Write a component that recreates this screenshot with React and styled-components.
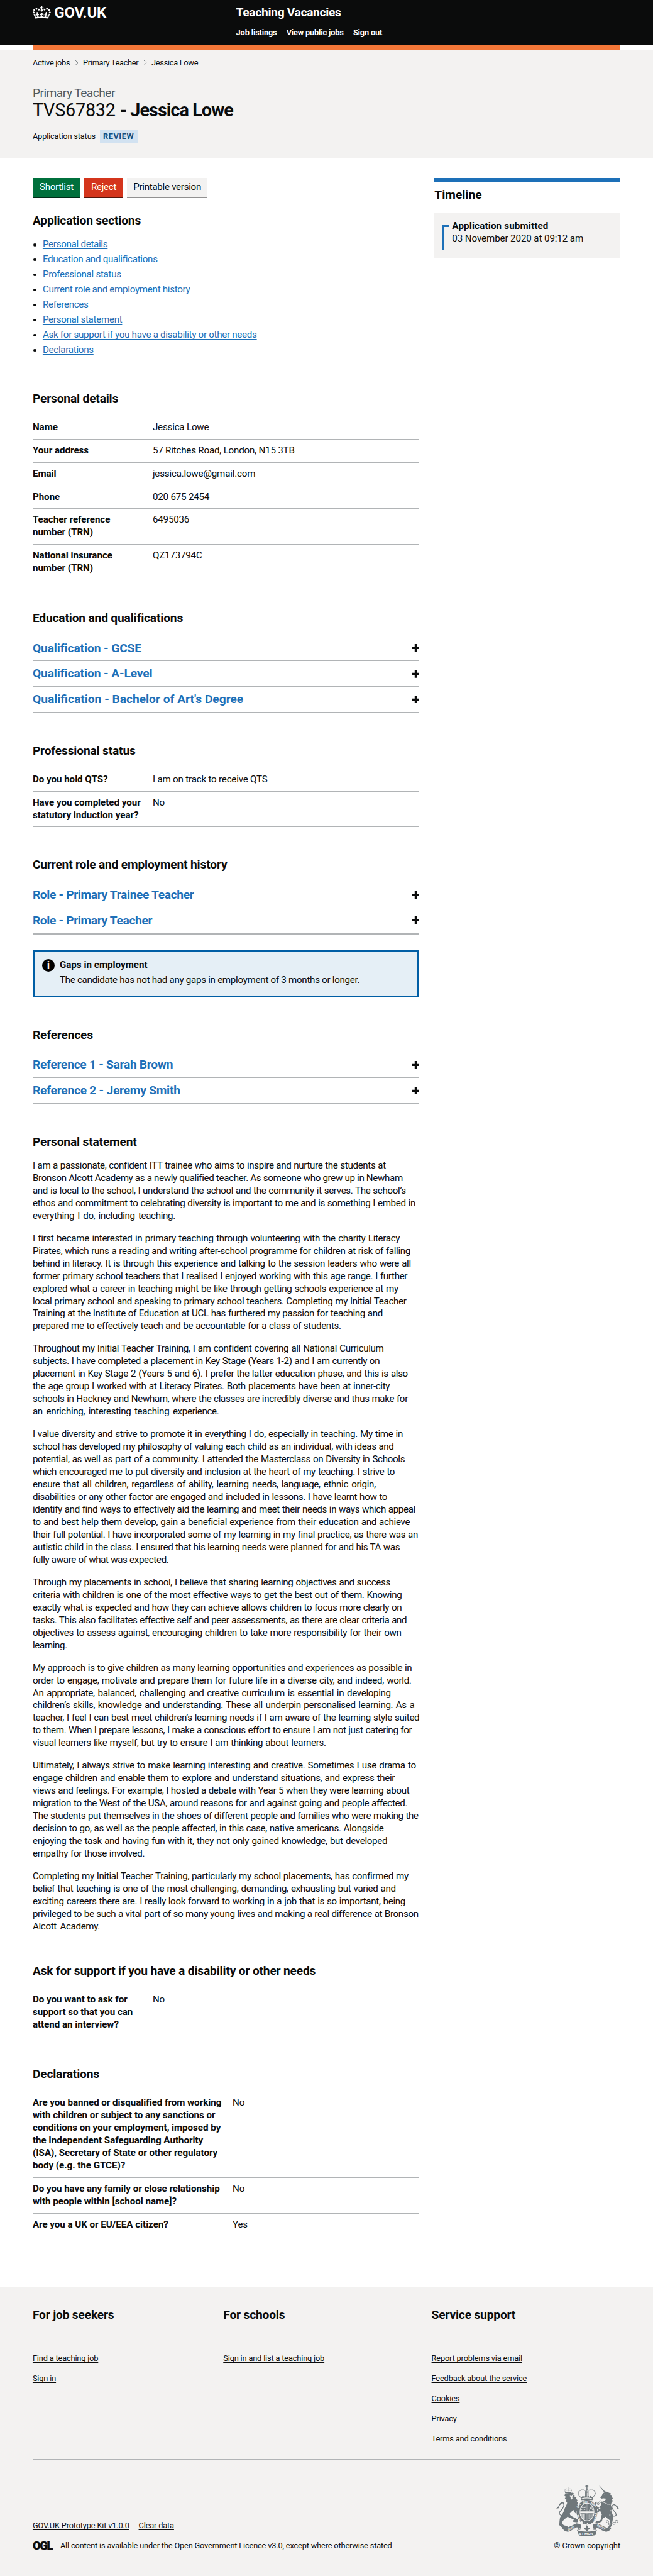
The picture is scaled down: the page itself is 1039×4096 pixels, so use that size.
import React from "react";
import styled, { createGlobalStyle, css } from "styled-components";

/* 1rem is ten design pixels, so 1.9rem is the 19px body size. */
const GlobalStyle = createGlobalStyle`
  html { font-size: 7.992px; }
  *, *::before, *::after { box-sizing: border-box; }
  body {
    margin: 0;
    background: #fff;
    color: #0b0c0c;
    font-family: Roboto, "Liberation Sans", sans-serif;
    font-size: 1.9rem;
    line-height: 2.5rem;
    letter-spacing: -0.018em;
  }
  h1, h2, h3, p, ul, dl, dd { margin: 0; padding: 0; font-weight: inherit; }
`;

const underline = css`
  text-decoration: underline;
  text-decoration-thickness: 1px;
  text-underline-offset: 0.12em;
  text-decoration-skip-ink: none;
`;

const Container = styled.div`
  margin: 0 6.5rem;
`;

/* Header */
const Header = styled.header`
  height: 9rem;
  background: #0b0c0c;
  color: #fff;
`;
const HeaderRow = styled(Container)`
  display: grid;
  grid-template-columns: 40.5rem 1fr;
`;
const Logo = styled.a`
  display: flex;
  align-items: flex-start;
  gap: 0.7rem;
  padding-top: 1.1rem;
  font-size: 3rem;
  font-weight: 700;
  line-height: 2.6rem;
  letter-spacing: -0.006em;
`;
const CrownIcon = styled.svg`
  width: 3.6rem;
  height: 2.6rem;
  fill: currentColor;
`;
const LogoText = styled.span`
  padding-top: 0.1rem;
`;
const ServiceName = styled.div`
  padding-top: 1rem;
  font-size: 2.4rem;
  line-height: 3rem;
  font-weight: 700;
  letter-spacing: -0.016em;
`;
const Nav = styled.nav`
  display: flex;
  gap: 1.9rem;
  margin-top: 1.45rem;
  font-size: 1.6rem;
  line-height: 2rem;
  font-weight: 700;
  letter-spacing: -0.012em;
`;
const PhaseBar = styled(Container)`
  height: 1rem;
  background: #f47738;
`;

/* Title band */
const TitleBand = styled.section`
  height: 21.4rem;
  background: #f3f2f1;
  padding-top: 1.5rem;
`;
const Breadcrumbs = styled.nav`
  display: flex;
  align-items: center;
  font-size: 1.6rem;
  line-height: 2rem;
  letter-spacing: -0.022em;
`;
const Crumb = styled.a`
  ${(p) => p.$link && underline}
`;
const Chevron = styled.svg`
  width: 0.7rem;
  height: 1.2rem;
  margin: 0 0.95rem;
  fill: none;
  stroke: #505a5f;
`;
const Caption = styled.p`
  margin-top: 3.55rem;
  font-size: 2.4rem;
  line-height: 3rem;
  letter-spacing: -0.028em;
  color: #505a5f;
`;
const Title = styled.h1`
  font-size: 3.6rem;
  line-height: 4rem;
  letter-spacing: -0.008em;
  b { letter-spacing: -0.032em; }
`;
const Status = styled.div`
  display: flex;
  align-items: center;
  gap: 0.9rem;
  margin-top: 1.9rem;
  font-size: 1.6rem;
  line-height: 2.5rem;
  letter-spacing: -0.012em;
`;
const Tag = styled.strong`
  height: 2.5rem;
  padding: 0 0.7rem 0 0.6rem;
  background: #d2e2f1;
  color: #144e81;
  letter-spacing: 0.045em;
`;

/* Body */
const Columns = styled(Container)`
  display: grid;
  grid-template-columns: 77rem 37rem;
  justify-content: space-between;
  align-items: start;
  padding: 4rem 0 10rem;
`;
const Actions = styled.div`
  display: flex;
  gap: 0.8rem;
  height: 4rem;
  margin-bottom: 3.05rem;
`;
const Button = styled.button`
  width: ${(p) => p.$width}rem;
  height: 4rem;
  padding: 0;
  border: 0;
  border-bottom: 0.2rem solid ${(p) => p.$shadow};
  background: ${(p) => p.$bg};
  color: ${(p) => p.$color || "#fff"};
  font: inherit;
  letter-spacing: -0.02em;
`;
const H2 = styled.h2`
  margin-bottom: 2rem;
  font-size: 2.4rem;
  line-height: 3rem;
  font-weight: 700;
  letter-spacing: -0.009em;
`;
const Section = styled.section`
  margin-top: ${(p) => p.$top ?? 6}rem;
`;
const LinkList = styled.ul`
  display: grid;
  row-gap: 0.5rem;
  list-style: none;
`;
const LinkItem = styled.li`
  display: flex;
  align-items: center;
  gap: 1.3rem;
  &::before {
    content: "";
    width: 0.6rem;
    height: 0.6rem;
    margin-left: 0.1rem;
    border-radius: 50%;
    background: #0b0c0c;
  }
`;
const BodyLink = styled.a`
  ${underline}
  color: #1d70b8;
  letter-spacing: -0.02em;
`;
const Summary = styled.dl``;
const SummaryRow = styled.div`
  display: grid;
  grid-template-columns: ${(p) => p.$key}rem 1fr;
  padding: 1rem 0;
  border-bottom: 1px solid #b1b4b6;
  min-height: 4.6rem;
  height: ${(p) => p.$lines * 2.5 + 2.1}rem;
`;
const Key = styled.dt`
  font-weight: 700;
  letter-spacing: -0.003em;
  white-space: nowrap;
`;
const Value = styled.dd`
  letter-spacing: -0.014em;
`;
const AccordionBox = styled.div`
  border-bottom: 0.1rem solid #b1b4b6;
`;
const AccordionRow = styled.div`
  display: flex;
  align-items: center;
  justify-content: space-between;
  height: 5.1rem;
  border-bottom: 1px solid #b1b4b6;
  font-size: 2.4rem;
  line-height: 3rem;
  font-weight: 700;
  letter-spacing: ${(p) => p.$track}em;
  color: #1d70b8;
`;
const PlusIcon = styled.svg`
  width: 1.6rem;
  height: 1.6rem;
  fill: #0b0c0c;
`;
const Notice = styled.div`
  display: grid;
  grid-template-columns: 2.5rem 1fr;
  column-gap: 1rem;
  height: 9.5rem;
  margin-top: 3rem;
  padding: 1.5rem;
  border: 0.5rem solid #005ea5;
  background: #e5eff6;
`;
const InfoIcon = styled.span`
  width: 2.5rem;
  height: 2.5rem;
  border-radius: 50%;
  background: #000;
  color: #fff;
  text-align: center;
  font-size: 2.4rem;
  font-weight: 500;
  letter-spacing: 0;
`;
const NoticeTitle = styled.h3`
  font-size: 1.9rem;
  font-weight: 700;
  letter-spacing: 0;
  margin-bottom: 0.5rem;
`;
const NoticeText = styled.p`
  letter-spacing: -0.02em;
`;
const Paragraph = styled.p`
  & + & { margin-top: 2rem; }
`;
const Line = styled.span`
  display: block;
  width: ${(p) => p.$width}rem;
  height: 2.5rem;
  letter-spacing: -0.023em;
  white-space: nowrap;
  text-align: justify;
  text-align-last: justify;
`;

/* Timeline */
const TimelineBox = styled.aside`
  border-top: 1rem solid #1d70b8;
  padding-top: 1rem;
`;
const TimelineTitle = styled(H2)`
  letter-spacing: 0;
`;
const TimelineCard = styled.div`
  display: flex;
  gap: 0.5rem;
  height: 9rem;
  padding: 1.5rem;
  background: #f3f2f1;
`;
const Bracket = styled.div`
  width: 1.5rem;
  height: 5rem;
  margin-top: 1rem;
  border: solid #1d70b8;
  border-width: 0.5rem 0 0;
  &::before {
    content: "";
    display: block;
    width: 0.5rem;
    height: 4.5rem;
    background: #1d70b8;
  }
`;
const Event = styled.div`
  letter-spacing: -0.008em;
  b { display: block; letter-spacing: 0.01em; }
`;

/* Footer */
const Footer = styled.footer`
  height: 57.5rem;
  border-top: 1px solid #b1b4b6;
  background: #f3f2f1;
  padding-top: 4rem;
  font-size: 1.6rem;
  line-height: 2rem;
  letter-spacing: -0.012em;
`;
const FooterColumns = styled.div`
  display: grid;
  grid-template-columns: 34.9rem 38.4rem 37.6rem;
  justify-content: space-between;
  height: 30.2rem;
  border-bottom: 1px solid #b1b4b6;
`;
const FooterTitle = styled(H2)`
  height: 5.1rem;
  margin-bottom: 4rem;
  border-bottom: 1px solid #b1b4b6;
`;
const FooterLink = styled.a`
  ${underline}
  ${(p) => p.$block && "display: table; margin-bottom: 2rem;"}
`;
const Meta = styled.div`
  display: flex;
  justify-content: space-between;
  align-items: flex-end;
  margin-top: 5rem;
  height: 13.2rem;
`;
const MetaLinks = styled.div`
  display: flex;
  gap: 1.85rem;
  margin-bottom: 2rem;
`;
const Licence = styled.div`
  display: flex;
  align-items: center;
`;
const Ogl = styled.span`
  width: 5.5rem;
  font-size: 2.3rem;
  font-weight: 900;
  letter-spacing: -0.07em;
  -webkit-text-stroke: 0.06rem currentColor;
`;
const Copyright = styled.div`
  display: flex;
  flex-direction: column;
  align-items: flex-end;
  letter-spacing: 0;
`;
const CrestSvg = styled.svg`
  width: 12.5rem;
  height: 10.2rem;
  margin: 0 0.3rem 1rem 0;
`;

const CROWN =
  "M25 30.2c3.5 1.5 7.7-.2 9.1-3.7 1.5-3.6-.2-7.8-3.9-9.2-3.6-1.4-7.6.3-9.1 3.9-1.4 3.5.3 7.5 3.9 9zM9 39.5c3.6 1.5 7.8-.2 9.2-3.7 1.5-3.6-.2-7.8-3.9-9.1-3.6-1.5-7.6.2-9.1 3.8-1.4 3.5.3 7.5 3.8 9zM4.4 57.2c3.5 1.5 7.7-.2 9.1-3.8 1.5-3.6-.2-7.7-3.9-9.1-3.5-1.5-7.6.3-9.1 3.8-1.4 3.5.3 7.6 3.9 9.1zm38.3-21.4c3.5 1.5 7.7-.2 9.1-3.8 1.5-3.6-.2-7.7-3.9-9.1-3.6-1.5-7.6.3-9.1 3.8-1.3 3.6.4 7.7 3.9 9.1zm64.4-5.6c-3.6 1.5-7.8-.2-9.1-3.7-1.5-3.6.2-7.8 3.8-9.2 3.6-1.4 7.7.3 9.2 3.9 1.3 3.5-.4 7.5-3.9 9zm15.9 9.3c-3.6 1.5-7.7-.2-9.1-3.7-1.5-3.6.2-7.8 3.7-9.1 3.6-1.5 7.7.2 9.2 3.8 1.5 3.5-.3 7.5-3.8 9zm4.7 17.7c-3.6 1.5-7.8-.2-9.2-3.8-1.5-3.6.2-7.7 3.9-9.1 3.6-1.5 7.7.3 9.2 3.8 1.3 3.5-.4 7.6-3.9 9.1zM89.3 35.8c-3.6 1.5-7.8-.2-9.2-3.8-1.4-3.6.2-7.7 3.9-9.1 3.6-1.5 7.7.3 9.2 3.8 1.4 3.6-.3 7.7-3.9 9.1zM69.7 17.7l8.9 4.7V9.3l-8.9 2.8c-.2-.3-.5-.6-.9-.9L72.4 0H59.6l3.5 11.2c-.3.3-.6.5-.9.9l-8.8-2.8v13.1l8.8-4.7c.3.3.6.7.9.9l-5 15.4v.1c-.2.8-.4 1.6-.4 2.4 0 4.1 3.1 7.5 7 8.1h.2c.3 0 .7.1 1 .1.4 0 .7 0 1-.1h.2c4-.6 7.1-4.1 7.1-8.1 0-.8-.1-1.7-.4-2.4V34l-5.1-15.4c.4-.2.7-.6 1-.9zM66 92.8c16.9 0 32.8 1.1 47.1 3.2 4-16.9 8.9-26.7 14-33.5l-9.6-3.4c1 4.9 1.1 7.2 0 10.2-1.5-1.4-3-4.3-4.2-8.7L108.6 76c2.8-2 5-3.2 7.5-3.3-4.4 9.4-10 11.9-13.6 11.2-4.3-.8-6.3-4.6-5.6-7.9 1-4.7 5.7-5.9 8-.5 4.3-8.7-3-11.4-7.6-8.8 7.1-7.2 7.9-13.5 2.1-21.1-8 6.1-8.1 12.3-4.5 20.8-4.7-5.4-12.1-2.5-9.5 6.2 3.4-5.2 7.9-2 7.2 3.1-.6 4.3-6.4 7.8-13.5 7.2-10.3-.9-10.9-8-11.2-13.8 2.5-.5 7.1 1.8 11 7.3L80.2 60c-4.1 4.4-8 5.3-12.3 5.4 1.4-4.4 8-11.6 8-11.6H55.5s6.4 7.2 7.9 11.6c-4.2-.1-8-1-12.3-5.4l1.4 16.4c3.9-5.5 8.5-7.7 10.9-7.3-.3 5.8-.9 12.8-11.1 13.8-7.2.6-12.9-2.9-13.5-7.2-.7-5 3.8-8.3 7.1-3.1 2.7-8.7-4.6-11.6-9.4-6.2 3.7-8.5 3.6-14.7-4.6-20.8-5.8 7.6-5 13.9 2.2 21.1-4.7-2.6-11.9.1-7.7 8.8 2.3-5.5 7.1-4.2 8.1.5.7 3.3-1.3 7.1-5.7 7.9-3.5.7-9-1.8-13.5-11.2 2.5.1 4.7 1.3 7.5 3.3l-4.7-15.4c-1.2 4.4-2.7 7.2-4.3 8.7-1.1-3-.9-5.3 0-10.2l-9.5 3.4c5 6.9 9.9 16.7 14 33.5 14.8-2.1 30.8-3.2 47.7-3.2z";

function Crest() {
  const ink = "#6f777b";
  const paper = "#f3f2f1";
  return (
    <CrestSvg viewBox="141 131 375 307" fill={ink} fontFamily="Roboto, sans-serif" fontWeight="700">
      {/* lion */}
      <g fill="none" stroke={ink}>
        <path strokeWidth="5" d="M152 270C158 245 176 232 184 242C192 256 178 276 164 290C154 302 162 318 182 314" />
        <path strokeWidth="3" d="M194 172C188 158 198 150 212 158C226 150 236 158 230 172M212 148V172M196 164H228" strokeDasharray="4 2" />
      </g>
      <path d="M141 274L150 262L158 270L150 272ZM156 252C162 238 178 232 188 238C176 240 168 244 164 252ZM192 172L232 172L230 180L194 180Z" />
      <path d="M195 182L240 178L247 184L242 190L252 194L250 202L262 206L258 214L268 222L264 230L272 240L266 246L270 258L280 270L270 276L272 290L262 286L262 306L250 296L244 282L232 292L222 302L224 312C236 322 254 330 270 338L272 348L266 356L242 352L238 344L250 342L226 330L208 322C196 334 184 340 180 348C174 358 176 368 188 374L206 378L210 386L202 391L180 388L166 380L159 372C160 356 160 342 164 326C170 314 182 302 186 288C190 270 204 252 206 238L198 228L202 220L192 212L198 204L190 194Z" />
      <path fill={paper} d="M218 196L226 192L230 196L238 190L240 196L236 204L238 214L230 220L226 210L228 204Z" />
      {/* unicorn */}
      <path d="M398 138L402 138L434 172L430 178ZM430 176L440 168L444 174L456 172L454 178L468 182L464 188L476 196L472 202L480 212L474 218L480 228L472 236L468 252C474 268 476 282 472 294C480 310 484 324 480 336L476 356L474 374L462 390L450 396L444 390L456 380L464 362L462 344L446 332L436 322C424 330 416 334 416 344L412 352L396 358L374 360L378 350L398 346L410 338L408 322L414 310C408 300 406 292 404 284L392 296L384 290L394 282L378 270L368 248L374 236L384 232L382 244L380 252L390 266L402 262L410 250L412 234L432 226L440 214L424 212L410 214L404 206L414 194L420 182Z" />
      <path fill="none" stroke={ink} strokeWidth="5" d="M466 306C480 326 500 320 500 308C498 292 472 280 474 262C478 244 498 246 508 272" />
      <path d="M500 254L510 262L516 276L504 272Z" />
      <g fill={paper} stroke={ink} strokeWidth="3">
        <circle cx="406" cy="232" r="6" /><circle cx="392" cy="244" r="6" /><circle cx="400" cy="272" r="6" />
        <circle cx="468" cy="286" r="5" /><circle cx="462" cy="312" r="5" /><circle cx="448" cy="351" r="7" />
        <circle cx="461" cy="366" r="7" /><circle cx="486" cy="362" r="7" /><circle cx="502" cy="351" r="8" />
      </g>
      <path fill="none" stroke={paper} strokeWidth="5" strokeDasharray="5 3" d="M414 224C430 244 450 250 466 246" />
      <circle cx="432" cy="188" r="2.5" fill={paper} />
      {/* royal crown */}
      <g fill="none" stroke={ink}>
        <path strokeWidth="5" strokeDasharray="5 2" d="M288 206C268 190 268 166 292 162C306 158 320 164 322 180M358 206C380 190 380 166 356 162C342 158 328 164 326 180" />
        <path strokeWidth="4" d="M324 132V206M315 139H333M318 150H330M318 160H330M316 170V200M332 170V200" />
      </g>
      <circle cx="324" cy="138" r="4" />
      <path d="M286 202L294 206L300 192L308 206L316 194L324 206L332 194L340 206L348 192L354 206L362 202L358 222H290Z" />
      <path fill={paper} d="M293 212C312 206 336 206 355 212L354 216C336 211 312 211 294 216Z" />
      {/* garter and shield */}
      <ellipse cx="325" cy="295" rx="62" ry="74" />
      <ellipse cx="325" cy="294" rx="44" ry="55" fill={paper} />
      <ellipse cx="325" cy="294" rx="40" ry="51" />
      <g stroke={paper} fill="none" strokeWidth="3">
        <path strokeWidth="4" d="M320 242V346M330 242V346M284 290H366M284 299H366" />
        <path strokeDasharray="8 3 4 3" d="M294 258H318M290 268H318M288 279H318M334 312H362M334 323H360M334 334H354" />
        <path d="M338 256L360 284M358 256L338 284M340 270H362M292 306V330M298 306V334M304 306V338M310 306V340" />
      </g>
      <g fill={paper} stroke="none" fontSize="20">
        <text transform="translate(274 272) rotate(-62)">OIT</text>
        <text x="300" y="244" fontSize="20">QUI</text>
        <text transform="translate(344 243) rotate(34)">MAL</text>
        <text transform="translate(374 300) rotate(100)" fontSize="17">PENSE</text>
        <text transform="translate(290 348) rotate(-112)">HON</text>
      </g>
      <path fill={paper} d="M288 352L296 348L300 360L290 364ZM306 356h6v6h-6zM324 360h6v6h-6z" />
      {/* motto ribbon */}
      <path d="M175 388C200 398 226 378 262 362L286 366L290 390L270 396L266 384C240 396 224 412 206 412C192 410 182 400 175 388ZM470 390C450 398 424 378 386 362L362 366L358 390L378 398L384 386C408 398 424 412 444 412C458 408 466 400 470 390ZM268 404C300 414 346 414 382 404L376 432C346 440 304 440 276 434Z" />
      <path fill="none" stroke={ink} strokeWidth="3" d="M264 366C270 384 292 390 286 398C280 404 266 396 266 406M386 366C380 384 356 390 362 398C368 404 384 396 382 406" />
      <g fill={paper} fontSize="20">
        <text transform="translate(214 409) rotate(-29)">DIEU</text>
        <text transform="translate(382 378) rotate(27)" fontSize="19">DROIT</text>
        <text x="279" y="433" fontSize="22">ET MON</text>
      </g>
      <path d="M324 372L331 384L328 392L338 388L342 396L330 402L328 411H320L318 402L306 396L310 388L320 392L317 384Z" />
    </CrestSvg>
  );
}

function Plus() {
  return (
    <PlusIcon viewBox="0 0 16 16">
      <path d="M6 0h4v6h6v4h-6v6H6v-6H0V6h6z" />
    </PlusIcon>
  );
}

function Accordion({ items }) {
  return (
    <AccordionBox>
      {items.map(([t, track]) => (
        <AccordionRow key={t} $track={track}><span>{t}</span><Plus /></AccordionRow>
      ))}
    </AccordionBox>
  );
}

function Details({ rows, keyWidth = 23.9 }) {
  return (
    <Summary>
      {rows.map(([k, v]) => (
        <SummaryRow key={k[0]} $key={keyWidth} $lines={k.length}>
          <Key>{k.map((l, i) => <React.Fragment key={i}>{i > 0 && <br />}{l}</React.Fragment>)}</Key>
          <Value>{v}</Value>
        </SummaryRow>
      ))}
    </Summary>
  );
}

const SECTIONS = [
  "Personal details",
  "Education and qualifications",
  "Professional status",
  "Current role and employment history",
  "References",
  "Personal statement",
  "Ask for support if you have a disability or other needs",
  "Declarations",
];

const PERSONAL = [
  [["Name"], "Jessica Lowe"],
  [["Your address"], "57 Ritches Road, London, N15 3TB"],
  [["Email"], "jessica.lowe@gmail.com"],
  [["Phone"], "020 675 2454"],
  [["Teacher reference", "number (TRN)"], "6495036"],
  [["National insurance", "number (TRN)"], "QZ173794C"],
];

const DECLARATIONS = [
  [[
    "Are you banned or disqualified from working",
    "with children or subject to any sanctions or",
    "conditions on your employment, imposed by",
    "the Independent Safeguarding Authority",
    "(ISA), Secretary of State or other regulatory",
    "body (e.g. the GTCE)?",
  ], "No"],
  [["Do you have any family or close relationship", "with people within [school name]?"], "No"],
  [["Are you a UK or EU/EEA citizen?"], "Yes"],
];

/* Each line of the statement with its measure in rem. */
const STATEMENT = [
  [
    [70.3, "I am a passionate, confident ITT trainee who aims to inspire and nurture the students at"],
    [73.7, "Bronson Alcott Academy as a newly qualified teacher. As someone who grew up in Newham"],
    [74.3, "and is local to the school, I understand the school and the community it serves. The school’s"],
    [76.2, "ethos and commitment to celebrating diversity is important to me and is something I embed in"],
    [28.4, "everything I do, including teaching."],
  ],
  [
    [73.1, "I first became interested in primary teaching through volunteering with the charity Literacy"],
    [75.2, "Pirates, which runs a reading and writing after-school programme for children at risk of falling"],
    [75.3, "behind in literacy. It is through this experience and talking to the session leaders who were all"],
    [74.6, "former primary school teachers that I realised I enjoyed working with this age range. I further"],
    [72.8, "explored what a career in teaching might be like through getting schools experience at my"],
    [74.4, "local primary school and speaking to primary school teachers. Completing my Initial Teacher"],
    [69.7, "Training at the Institute of Education at UCL has furthered my passion for teaching and"],
    [61.4, "prepared me to effectively teach and be accountable for a class of students."],
  ],
  [
    [69.9, "Throughout my Initial Teacher Training, I am confident covering all National Curriculum"],
    [69.1, "subjects. I have completed a placement in Key Stage (Years 1-2) and I am currently on"],
    [74.7, "placement in Key Stage 2 (Years 5 and 6). I prefer the latter education phase, and this is also"],
    [71.1, "the age group I worked with at Literacy Pirates. Both placements have been at inner-city"],
    [74.7, "schools in Hackney and Newham, where the classes are incredibly diverse and thus make for"],
    [37.1, "an enriching, interesting teaching experience."],
  ],
  [
    [73.7, "I value diversity and strive to promote it in everything I do, especially in teaching. My time in"],
    [71.9, "school has developed my philosophy of valuing each child as an individual, with ideas and"],
    [74.1, "potential, as well as part of a community. I attended the Masterclass on Diversity in Schools"],
    [72.1, "which encouraged me to put diversity and inclusion at the heart of my teaching. I strive to"],
    [68.3, "ensure that all children, regardless of ability, learning needs, language, ethnic origin,"],
    [70.6, "disabilities or any other factor are engaged and included in lessons. I have learnt how to"],
    [76.2, "identify and find ways to effectively aid the learning and meet their needs in ways which appeal"],
    [75.1, "to and best help them develop, gain a beneficial experience from their education and achieve"],
    [76.7, "their full potential. I have incorporated some of my learning in my final practice, as there was an"],
    [73.1, "autistic child in the class. I ensured that his learning needs were planned for and his TA was"],
    [27.1, "fully aware of what was expected."],
  ],
  [
    [71.2, "Through my placements in school, I believe that sharing learning objectives and success"],
    [73.5, "criteria with children is one of the most effective ways to get the best out of them. Knowing"],
    [73.5, "exactly what is expected and how they can achieve allows children to focus more clearly on"],
    [74.5, "tasks. This also facilitates effective self and peer assessments, as there are clear criteria and"],
    [73.4, "objectives to assess against, encouraging children to take more responsibility for their own"],
    [7, "learning."],
  ],
  [
    [75.5, "My approach is to give children as many learning opportunities and experiences as possible in"],
    [75.4, "order to engage, motivate and prepare them for future life in a diverse city, and indeed, world."],
    [71.3, "An appropriate, balanced, challenging and creative curriculum is essential in developing"],
    [76, "children’s skills, knowledge and understanding. These all underpin personalised learning. As a"],
    [77, "teacher, I feel I can best meet children’s learning needs if I am aware of the learning style suited"],
    [75.5, "to them. When I prepare lessons, I make a conscious effort to ensure I am not just catering for"],
    [58.4, "visual learners like myself, but try to ensure I am thinking about learners."],
  ],
  [
    [76.3, "Ultimately, I always strive to make learning interesting and creative. Sometimes I use drama to"],
    [72.1, "engage children and enable them to explore and understand situations, and express their"],
    [75, "views and feelings. For example, I hosted a debate with Year 5 when they were learning about"],
    [74.6, "migration to the West of the USA, around reasons for and against going and people affected."],
    [76.8, "The students put themselves in the shoes of different people and families who were making the"],
    [69.9, "decision to go, as well as the people affected, in this case, native americans. Alongside"],
    [70.6, "enjoying the task and having fun with it, they not only gained knowledge, but developed"],
    [22.3, "empathy for those involved."],
  ],
  [
    [74.8, "Completing my Initial Teacher Training, particularly my school placements, has confirmed my"],
    [72.3, "belief that teaching is one of the most challenging, demanding, exhausting but varied and"],
    [74.2, "exciting careers there are. I really look forward to working in a job that is so important, being"],
    [76.8, "privileged to be such a vital part of so many young lives and making a real difference at Bronson"],
    [13.4, "Alcott Academy."],
  ],
];

const FOOTER = [
  ["For job seekers", ["Find a teaching job", "Sign in"]],
  ["For schools", ["Sign in and list a teaching job"]],
  ["Service support", ["Report problems via email", "Feedback about the service", "Cookies", "Privacy", "Terms and conditions"]],
];

function Separator() {
  return (
    <Chevron viewBox="0 0 7 12">
      <path d="M1 .8 6 6 1 11.2" />
    </Chevron>
  );
}

export default function App() {
  return (
    <>
      <GlobalStyle />
      <Header>
        <HeaderRow>
          <Logo>
            <CrownIcon viewBox="0 0 132 97" preserveAspectRatio="none"><path d={CROWN} /></CrownIcon>
            <LogoText>GOV.UK</LogoText>
          </Logo>
          <div>
            <ServiceName>Teaching Vacancies</ServiceName>
            <Nav><a>Job listings</a><a>View public jobs</a><a>Sign out</a></Nav>
          </div>
        </HeaderRow>
      </Header>
      <PhaseBar />
      <TitleBand>
        <Container>
          <Breadcrumbs>
            <Crumb $link>Active jobs</Crumb><Separator />
            <Crumb $link>Primary Teacher</Crumb><Separator />
            <Crumb>Jessica Lowe</Crumb>
          </Breadcrumbs>
          <Caption>Primary Teacher</Caption>
          <Title>TVS67832 <b>- Jessica Lowe</b></Title>
          <Status><span>Application status</span><Tag>REVIEW</Tag></Status>
        </Container>
      </TitleBand>
      <Columns>
        <main>
          <Actions>
            <Button $width={9.5} $bg="#00703c" $shadow="#002d18">Shortlist</Button>
            <Button $width={7.7} $bg="#d4351c" $shadow="#55150b">Reject</Button>
            <Button $width={16} $bg="#f3f2f1" $shadow="#929191" $color="#0b0c0c">Printable version</Button>
          </Actions>
          <H2>Application sections</H2>
          <LinkList>
            {SECTIONS.map((s) => <LinkItem key={s}><BodyLink>{s}</BodyLink></LinkItem>)}
          </LinkList>
          <Section $top={6.95}><H2>Personal details</H2><Details rows={PERSONAL} /></Section>
          <Section>
            <H2>Education and qualifications</H2>
            <Accordion items={[
              ["Qualification - GCSE", -0.005],
              ["Qualification - A-Level", -0.005],
              ["Qualification - Bachelor of Art's Degree", 0],
            ]} />
          </Section>
          <Section>
            <H2>Professional status</H2>
            <Details rows={[
              [["Do you hold QTS?"], "I am on track to receive QTS"],
              [["Have you completed your", "statutory induction year?"], "No"],
            ]} />
          </Section>
          <Section>
            <H2>Current role and employment history</H2>
            <Accordion items={[["Role - Primary Trainee Teacher", -0.018], ["Role - Primary Teacher", -0.018]]} />
            <Notice>
              <InfoIcon>i</InfoIcon>
              <div>
                <NoticeTitle>Gaps in employment</NoticeTitle>
                <NoticeText>The candidate has not had any gaps in employment of 3 months or longer.</NoticeText>
              </div>
            </Notice>
          </Section>
          <Section>
            <H2>References</H2>
            <Accordion items={[["Reference 1 - Sarah Brown", -0.014], ["Reference 2 - Jeremy Smith", -0.012]]} />
          </Section>
          <Section>
            <H2>Personal statement</H2>
            {STATEMENT.map((lines, i) => (
              <Paragraph key={i}>
                {lines.map(([w, t]) => <Line key={t} $width={w}>{t}</Line>)}
              </Paragraph>
            ))}
          </Section>
          <Section>
            <H2>Ask for support if you have a disability or other needs</H2>
            <Details rows={[[["Do you want to ask for", "support so that you can", "attend an interview?"], "No"]]} />
          </Section>
          <Section>
            <H2>Declarations</H2>
            <Details rows={DECLARATIONS} keyWidth={39.8} />
          </Section>
        </main>
        <TimelineBox>
          <TimelineTitle>Timeline</TimelineTitle>
          <TimelineCard>
            <Bracket />
            <Event><b>Application submitted</b>03 November 2020 at 09:12 am</Event>
          </TimelineCard>
        </TimelineBox>
      </Columns>
      <Footer>
        <Container>
          <FooterColumns>
            {FOOTER.map(([title, links]) => (
              <div key={title}>
                <FooterTitle>{title}</FooterTitle>
                {links.map((l) => <FooterLink $block key={l}>{l}</FooterLink>)}
              </div>
            ))}
          </FooterColumns>
          <Meta>
            <div>
              <MetaLinks><FooterLink>GOV.UK Prototype Kit v1.0.0</FooterLink><FooterLink>Clear data</FooterLink></MetaLinks>
              <Licence>
                <Ogl>OGL</Ogl>
                <span>All content is available under the <FooterLink>Open Government Licence v3.0</FooterLink>, except where otherwise stated</span>
              </Licence>
            </div>
            <Copyright>
              <Crest />
              <FooterLink>© Crown copyright</FooterLink>
            </Copyright>
          </Meta>
        </Container>
      </Footer>
    </>
  );
}
